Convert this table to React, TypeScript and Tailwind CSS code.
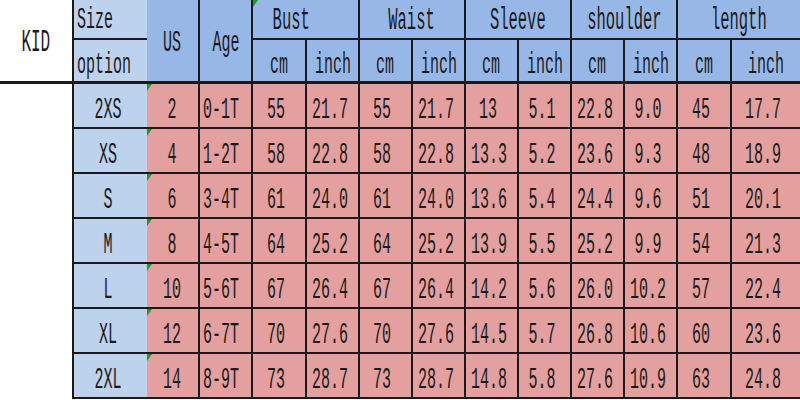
import React from 'react';

// KID size chart, spreadsheet style
const rows = [
  ["2XS", "2", "0-1T", "55", "21.7", "55", "21.7", "13", "5.1", "22.8", "9.0", "45", "17.7"],
  ["XS", "4", "1-2T", "58", "22.8", "58", "22.8", "13.3", "5.2", "23.6", "9.3", "48", "18.9"],
  ["S", "6", "3-4T", "61", "24.0", "61", "24.0", "13.6", "5.4", "24.4", "9.6", "51", "20.1"],
  ["M", "8", "4-5T", "64", "25.2", "64", "25.2", "13.9", "5.5", "25.2", "9.9", "54", "21.3"],
  ["L", "10", "5-6T", "67", "26.4", "67", "26.4", "14.2", "5.6", "26.0", "10.2", "57", "22.4"],
  ["XL", "12", "6-7T", "70", "27.6", "70", "27.6", "14.5", "5.7", "26.8", "10.6", "60", "23.6"],
  ["2XL", "14", "8-9T", "73", "28.7", "73", "28.7", "14.8", "5.8", "27.6", "10.9", "63", "24.8"],
];

const groups = ["Bust", "Waist", "Sleeve", "shoulder", "length"];

// condensed typewriter-ish text
const T = ({ children, left }: { children: React.ReactNode; left?: boolean }) => (
  <span className={`inline-block whitespace-nowrap scale-x-50 ${left ? "origin-left" : "origin-center"}`}>
    {children}
  </span>
);

const Flag = () => (
  <div className="absolute left-0 top-0 w-[5px] h-[7px] bg-[#12a01e] [clip-path:polygon(0_0,100%_0,0_100%)]" />
);

const App = () => {
  return (
    <div className="w-[800px] h-[400px] overflow-hidden bg-white text-[#1a1a1a] font-['Liberation_Mono',monospace]">
      <div className="grid grid-cols-[72px_75px_53px_53px_54px_53px_53px_53px_53px_53px_53px_53px_54px_68px] grid-rows-[40px_44px_repeat(7,45px)] text-[30px] leading-none">
        {/* header */}
        <div className="row-span-2 flex items-center justify-center pt-[4px] border-b-[3px] border-[#1a1a1a] text-[32px]">
          <T>KID</T>
        </div>
        <div className="flex items-center pl-[3px] pt-[2px] bg-[#bdd2ec] border-l-2 border-b-2 border-[#1a1a1a]">
          <T left>Size</T>
        </div>
        <div className="row-span-2 flex items-center justify-center pt-[4px] bg-[#97b8e6] border-r-2 border-b-[3px] border-[#1a1a1a]">
          <T>US</T>
        </div>
        <div className="row-span-2 flex items-center justify-center pt-[4px] bg-[#97b8e6] border-r-2 border-b-[3px] border-[#1a1a1a]">
          <T>Age</T>
        </div>
        {groups.map((g, i) => (
          <div
            key={g}
            className={`relative col-span-2 flex items-center justify-center pt-[2px] bg-[#97b8e6] border-b-2 border-[#1a1a1a] text-[31px] ${i < 4 ? "border-r-2" : ""} ${i === 0 ? "pr-[28px]" : ""}`}
          >
            {i === 0 && <Flag />}
            <T>{g}</T>
          </div>
        ))}

        <div className="flex items-center pl-[3px] pt-[8px] bg-[#bdd2ec] border-l-2 border-b-[3px] border-[#1a1a1a]">
          <T left>option</T>
        </div>
        {groups.map((g, i) => (
          <React.Fragment key={g + "-u"}>
            <div className="flex items-center justify-center pt-[8px] bg-[#97b8e6] border-r-2 border-b-[3px] border-[#1a1a1a]">
              <T>cm</T>
            </div>
            <div className={`flex items-center justify-center pt-[8px] bg-[#97b8e6] border-b-[3px] border-[#1a1a1a] ${i < 4 ? "border-r-2" : ""}`}>
              <T>inch</T>
            </div>
          </React.Fragment>
        ))}

        {/* body */}
        {rows.map((r) => (
          <React.Fragment key={r[0]}>
            <div />
            <div className="flex items-center justify-center pt-[8px] pr-[5px] bg-[#bdd2ec] border-l-2 border-b-2 border-[#1a1a1a]">
              <T>{r[0]}</T>
            </div>
            <div className="relative flex items-center justify-center pt-[8px] bg-[#e3a09e] border-r-2 border-b-2 border-[#1a1a1a]">
              <Flag />
              <T>{r[1]}</T>
            </div>
            <div className="flex items-center pl-[3px] pt-[8px] bg-[#e3a09e] border-r-2 border-b-2 border-[#1a1a1a]">
              <T left>{r[2]}</T>
            </div>
            {r.slice(3).map((v, j) => (
              <div
                key={j}
                className={`flex items-center justify-center pt-[8px] pr-[6px] bg-[#e3a09e] border-b-2 border-[#1a1a1a] ${j < 9 ? "border-r-2" : ""}`}
              >
                <T>{v}</T>
              </div>
            ))}
          </React.Fragment>
        ))}
      </div>
    </div>
  );
};

export default App;
